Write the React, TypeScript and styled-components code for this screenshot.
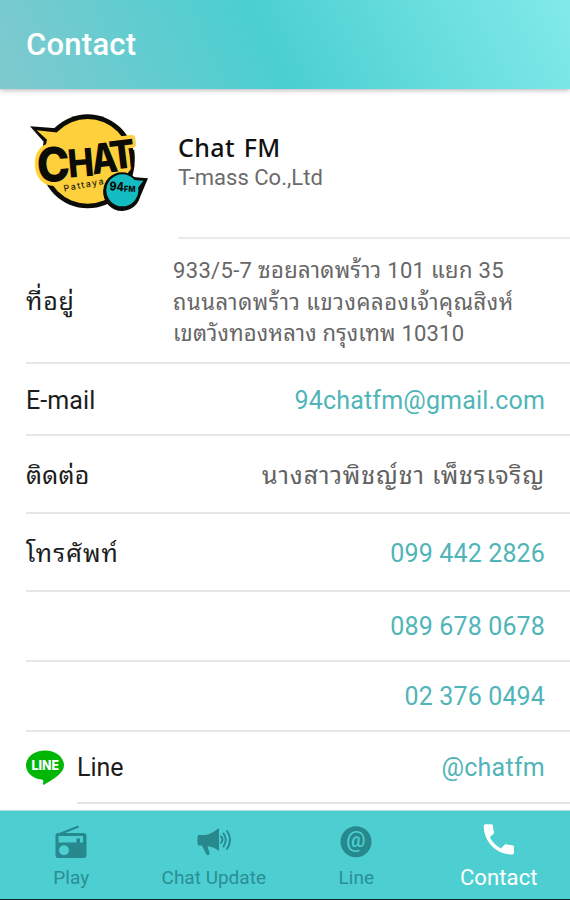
import React from 'react';
import styled, { createGlobalStyle } from 'styled-components';

const GlobalStyle = createGlobalStyle`
  * { box-sizing: border-box; }
  body { margin: 0; background: #fff; font-family: Roboto, "Noto Sans Thai Looped", Loma, Waree, Garuda, "Noto Sans Thai", "Noto Sans", sans-serif; }
`;

const Screen = styled.div`
  width: 570px;
  height: 900px;
  display: flex;
  flex-direction: column;
  overflow: hidden;
  background: #fff;
`;

const Header = styled.header`
  flex: none;
  height: 89px;
  display: flex;
  align-items: center;
  padding-left: 26px;
  background: linear-gradient(64deg, #80c9ce 0%, #4bcfd1 47%, #80e9e9 98%);
  box-shadow: 0 1px 5px rgba(60, 50, 60, 0.4);
`;

const Title = styled.h1`
  margin: 0;
  color: #fff;
  font-size: 31px;
  font-weight: 500;
  letter-spacing: 0.25px;
`;

const Content = styled.main`
  flex: 1;
  min-height: 0;
  overflow: hidden;
`;

const Profile = styled.section`
  height: 150px;
  display: flex;
`;

const LogoBox = styled.div`
  width: 178px;
  padding: 11px 0 0 10px;
`;

const ProfileText = styled.div`
  flex: 1;
  padding-top: 43px;
  border-bottom: 2px solid #eaeaea;
`;

const Name = styled.div`
  font: 500 25px/30px "Noto Sans", sans-serif;
  letter-spacing: 0.35px;
  word-spacing: 2px;
  color: #111;
`;

const Company = styled.div`
  padding-top: 2px;
  font-size: 22px;
  line-height: 28px;
  letter-spacing: 0.02px;
  color: #6b6b6b;
`;

const Row = styled.section<{ $h: number; $top?: number }>`
  height: ${(p) => p.$h}px;
  margin-left: 26px;
  padding: ${(p) => p.$top ?? 3}px 25px 0 0;
  display: flex;
  align-items: center;
  justify-content: space-between;
  border-bottom: 2px solid #e6e6e6;
`;

const Label = styled.div<{ $track?: number }>`
  font-size: 25px;
  letter-spacing: ${(p) => p.$track ?? 0.1}px;
  line-height: 36px;
  color: #1c1c1c;
  white-space: nowrap;
`;

const Value = styled.div<{ $link?: boolean; $track?: number }>`
  margin-left: auto;
  font-size: 25px;
  line-height: 36px;
  letter-spacing: ${(p) => p.$track ?? 0}px;
  color: ${(p) => (p.$link ? '#50b5b8' : '#626262')};
  white-space: nowrap;
`;

const Address = styled.div`
  width: 397px;
  margin-right: -25px;
  padding-top: 1px;
  font-size: 22px;
  line-height: 31.5px;
  color: #666;
  white-space: nowrap;
`;

const AddressLine = styled.div<{ $track: number }>`
  letter-spacing: ${(p) => p.$track}px;
`;

const LineRow = styled.section`
  display: flex;
  height: 72px;
  padding-left: 25px;
`;

const LineBadge = styled.div`
  width: 52px;
  padding-top: 16px;
`;

const LineBody = styled.div`
  flex: 1;
  display: flex;
  align-items: center;
  padding: 1px 25px 0 0;
  border-bottom: 2px solid #e4e4e4;
`;

const TabBar = styled.nav`
  flex: none;
  height: 90px;
  display: grid;
  grid-template-columns: repeat(4, 142.5px);
  background: #4dcfd1;
  border-top: 1px solid #a9dfe3;
  border-bottom: 1px solid #12282a;
`;

const Tab = styled.div<{ $active?: boolean }>`
  display: flex;
  flex-direction: column;
  align-items: center;
  padding-top: 12px;
  color: ${(p) => (p.$active ? '#fff' : '#27888e')};

  span {
    margin-top: 5px;
    font-size: ${(p) => (p.$active ? 22 : 19)}px;
    line-height: 24px;
    letter-spacing: ${(p) => (p.$active ? 0.1 : 0)}px;
    white-space: nowrap;
    opacity: ${(p) => (p.$active ? 1 : 0.9)};
  }
`;

const StationLogo = () => (
  <svg width="160" height="120" viewBox="0 0 480 360">
    <circle cx="233" cy="184" r="141" fill="#0b0b08" />
    <path d="M60 79 L158 86 L120 160 L97 147 L101 125 Z" fill="#0b0b08" />
    <circle cx="233" cy="184" r="127" fill="#fdd03c" />
    <path d="M80 91 L155 99 L125 150 L106 142 L111 119 Z" fill="#fdd03c" />
    <g fontFamily="Inter, sans-serif" fontWeight="800" textAnchor="middle">
      <g stroke="#fdd03c" strokeWidth="22" strokeLinejoin="round" fill="#fdd03c">
        <text transform="translate(133 245) rotate(-4) scale(.93 1)" fontSize="143">C</text>
        <text transform="translate(216 230) rotate(-5) scale(.9 1)" fontSize="116">H</text>
        <text transform="translate(288 219) rotate(-7) scale(.82 1)" fontSize="124">A</text>
        <text transform="translate(342 205) rotate(-7) scale(.96 1)" fontSize="118">T</text>
      </g>
      <g fill="#0b0b08">
        <text transform="translate(133 245) rotate(-4) scale(.93 1)" fontSize="143">C</text>
        <text transform="translate(216 230) rotate(-5) scale(.9 1)" fontSize="116">H</text>
        <text transform="translate(288 219) rotate(-7) scale(.82 1)" fontSize="124">A</text>
        <text transform="translate(342 205) rotate(-7) scale(.96 1)" fontSize="118">T</text>
      </g>
    </g>
    <path d="M369 150 Q373 175 366 199" fill="none" stroke="#0b0b08" strokeWidth="7" />
    <text transform="translate(163 275) rotate(-11)" fontFamily="Inter, sans-serif" fontSize="27" fontWeight="500" letterSpacing="4.2" fill="#2b250d">Pattaya</text>
    <path d="M414 235 L368 231 A56 56 0 1 0 390 292 Z" fill="#0b0b08" />
    <circle cx="336" cy="273" r="56" fill="#0b0b08" />
    <circle cx="337" cy="271" r="48" fill="#14bcc2" />
    <path d="M400 242 L372 240 L382 266 Z" fill="#14bcc2" />
    <g fontFamily="Inter, sans-serif" fontWeight="800" fill="#0b0b08">
      <text transform="translate(298 271) rotate(4)" fontSize="37" textLength="43" lengthAdjust="spacingAndGlyphs">94</text>
      <text transform="translate(341 275) rotate(2)" fontSize="25" textLength="35" lengthAdjust="spacingAndGlyphs">FM</text>
    </g>
  </svg>
);

const LineLogo = () => (
  <svg width="40" height="38" viewBox="0 0 40 38">
    <path d="M20 2.5C9.5 2.5 1 9 1 17.3c0 7.4 6.6 13.2 15.5 14.3 2 .4 2.1 1.2 1.5 4.1-.1.9.3 1.3 1.4.7C28 31.7 39 25.2 39 17.3 39 9 30.5 2.5 20 2.5z" fill="#00b606" />
    <text x="6.5" y="22" textLength="27.5" lengthAdjust="spacingAndGlyphs" fontFamily="Inter, sans-serif" fontSize="12.5" fontWeight="800" fill="#fff">LINE</text>
  </svg>
);

const RadioIcon = () => (
  <svg width="36" height="38" viewBox="0 0 36 38">
    <path d="M4 12 L25.5 3.5" stroke="currentColor" strokeWidth="2.3" />
    <path fillRule="evenodd" fill="currentColor" d="M5 10H30.5Q33.5 10 33.5 13V32Q33.5 35 30.5 35H5Q2.5 35 2.5 32V13Q2.5 10 5 10ZM5.5 13V19.5H23.5V15.5H27V19.5H30V13ZM11 22.2A5 5 0 1 0 11 32.2A5 5 0 1 0 11 22.2Z" />
  </svg>
);

const MegaphoneIcon = () => (
  <svg width="36" height="38" viewBox="0 0 36 38">
    <path fill="currentColor" d="M3 12H10Q16 10.5 23 5V28Q18 24 11.5 23.2L13.5 30Q14 33 10.5 31.5L6 22.5H3Q1.5 22.5 1.5 20V14Q1.5 12 3 12Z" />
    <path fill="none" stroke="currentColor" strokeWidth="1.9" strokeLinecap="round" d="M25 13.5Q28 16.5 25 20M27.5 10.5Q32 16.5 27.5 23.5M31 8Q37 16.5 31 26" />
  </svg>
);

const AtIcon = () => (
  <svg width="36" height="38" viewBox="0 0 36 38">
    <circle cx="18" cy="18.8" r="15.5" fill="currentColor" />
    <text x="18" y="24" textAnchor="middle" fontFamily="Roboto, sans-serif" fontSize="21.5" fontWeight="500" fill="#4dcfd1">@</text>
  </svg>
);

const PhoneIcon = () => (
  <svg width="40" height="38" viewBox="0 0 40 38">
    <path transform="translate(-.3 -3.8) scale(1.68)" fill="currentColor" d="M6.62 10.79c1.44 2.83 3.76 5.14 6.59 6.59l2.2-2.2c.27-.27.67-.36 1.02-.24 1.12.37 2.33.57 3.57.57.55 0 1 .45 1 1V20c0 .55-.45 1-1 1-9.39 0-17-7.61-17-17 0-.55.45-1 1-1h3.5c.55 0 1 .45 1 1 0 1.25.2 2.45.57 3.57.11.35.03.74-.25 1.02l-2.2 2.2z" />
  </svg>
);

export default function App() {
  return (
    <Screen>
      <GlobalStyle />
      <Header><Title>Contact</Title></Header>
      <Content>
        <Profile>
          <LogoBox><StationLogo /></LogoBox>
          <ProfileText>
            <Name>Chat FM</Name>
            <Company>T-mass Co.,Ltd</Company>
          </ProfileText>
        </Profile>
        <Row $h={125}>
          <Label $track={0.8}>ที่อยู่</Label>
          <Address>
            <AddressLine $track={0.33}>933/5-7 ซอยลาดพร้าว 101 แยก 35</AddressLine>
            <AddressLine $track={0.55}>ถนนลาดพร้าว แขวงคลองเจ้าคุณสิงห์</AddressLine>
            <AddressLine $track={0.2}>เขตวังทองหลาง กรุงเทพ 10310</AddressLine>
          </Address>
        </Row>
        <Row $h={72}>
          <Label>E-mail</Label>
          <Value $link $track={0.17}>94chatfm@gmail.com</Value>
        </Row>
        <Row $h={78}>
          <Label $track={0.3}>ติดต่อ</Label>
          <Value $track={0.85}>นางสาวพิชญ์ชา เพ็ชรเจริญ</Value>
        </Row>
        <Row $h={78}>
          <Label $track={1}>โทรศัพท์</Label>
          <Value $link $track={0.15}>099 442 2826</Value>
        </Row>
        <Row $h={70} $top={2}><Value $link $track={0.15}>089 678 0678</Value></Row>
        <Row $h={70} $top={1}><Value $link $track={0.15}>02 376 0494</Value></Row>
        <LineRow>
          <LineBadge><LineLogo /></LineBadge>
          <LineBody>
            <Label $track={0}>Line</Label>
            <Value $link $track={0.25}>@chatfm</Value>
          </LineBody>
        </LineRow>
      </Content>
      <TabBar>
        <Tab><RadioIcon /><span>Play</span></Tab>
        <Tab><MegaphoneIcon /><span>Chat Update</span></Tab>
        <Tab><AtIcon /><span>Line</span></Tab>
        <Tab $active><PhoneIcon /><span>Contact</span></Tab>
      </TabBar>
    </Screen>
  );
}
